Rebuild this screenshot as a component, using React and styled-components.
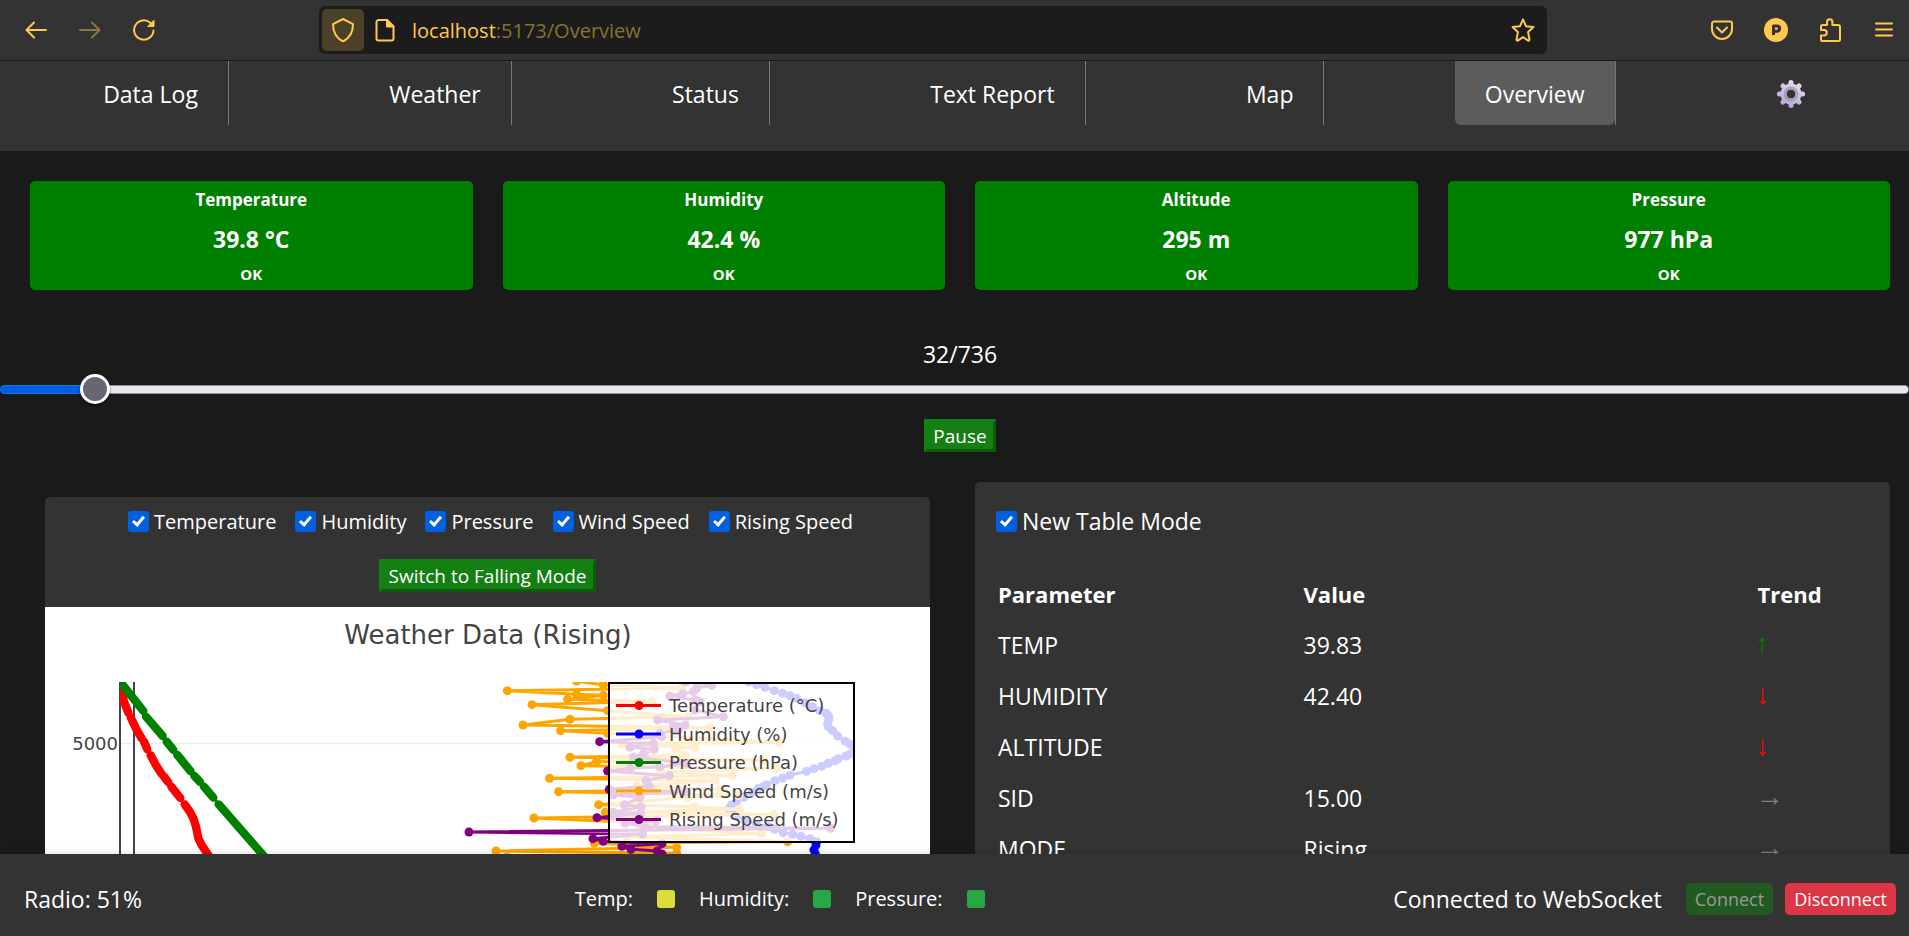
import React, { useState } from "react";
import styled, { createGlobalStyle, css } from "styled-components";

const GlobalStyle = createGlobalStyle`
  *, *::before, *::after { box-sizing: border-box; }
  body {
    margin: 0;
    background: #1a1a1a;
    color: #fff;
    font-family: "Open Sans", "Noto Sans", sans-serif;
    font-size: 23px;
    line-height: 32px;
  }
  button, input { font: inherit; color: inherit; margin: 0; }
`;

const Window = styled.div`
  display: flex;
  flex-direction: column;
  height: 100vh;
`;

/* ---------- browser toolbar ---------- */

const Toolbar = styled.header`
  display: flex;
  align-items: center;
  flex: none;
  height: 61px;
  padding: 0 13px 0 24px;
  background: #333;
  border-bottom: 1px solid #1a1a1a;
  color: #ffc94d;
`;

const ToolGroup = styled.div`
  display: flex;
  align-items: center;
  gap: 30px;
`;

const ToolButton = styled.button`
  display: flex;
  align-items: center;
  justify-content: center;
  flex: none;
  width: 24px;
  height: 24px;
  padding: 0;
  border: 0;
  background: none;
  opacity: ${(p) => (p.disabled ? 0.45 : 1)};
`;

const AddressBar = styled.div`
  display: flex;
  align-items: center;
  flex: 1;
  min-width: 0;
  height: 48px;
  margin: 0 163px;
  padding: 0 12px 0 3px;
  border-radius: 6px;
  background: #1c1c1c;
`;

const ShieldButton = styled(ToolButton)`
  width: 42px;
  height: 42px;
  margin-right: 9px;
  border-radius: 5px;
  background: #4d4028;
`;

const Address = styled.div`
  position: relative;
  flex: 1;
  margin-left: 15px;
  padding-top: 2px;
  font-size: 20px;
`;

const AddressInput = styled.input`
  position: absolute;
  inset: 0;
  width: 100%;
  padding: 0;
  border: 0;
  outline: 0;
  background: none;
  color: transparent;
`;

const Faded = styled.span`
  color: #8c7033;
`;

const Icon = styled.svg`
  display: block;
  flex: none;
  width: ${(p) => p.$size || 24}px;
  height: ${(p) => p.$size || 24}px;
  fill: none;
  stroke: currentColor;
  stroke-width: 2;
  stroke-linecap: round;
  stroke-linejoin: round;
`;

/* ---------- navigation ---------- */

const Nav = styled.nav`
  flex: none;
  height: 90px;
  padding: 0 8px;
  background: #333;
`;

const NavList = styled.ul`
  display: flex;
  justify-content: space-around;
  margin: 0;
  padding: 0;
  list-style: none;
`;

const NavItem = styled.li`
  border-right: ${(p) => (p.$last ? "0" : "1px solid #777")};
`;

const NavLink = styled.a`
  display: flex;
  align-items: center;
  height: 64px;
  padding: 1px 30px 0;
  border-radius: 0 0 6px 6px;
  color: #fff;
  text-decoration: none;
  background: ${(p) => (p.$active ? "#5c5c5c" : "transparent")};
`;

/* ---------- page ---------- */

const Page = styled.main`
  flex: 1;
  min-height: 0;
  overflow-y: auto;
  scrollbar-width: none;
`;

const Cards = styled.section`
  display: grid;
  grid-template-columns: repeat(4, 1fr);
  gap: 30px;
  padding: 30px 19px 30px 30px;
`;

const Card = styled.article`
  padding: 4px 4px 5px;
  border-radius: 5px;
  background: #008000;
  text-align: center;
  font-weight: 700;
`;

const CardTitle = styled.h2`
  margin: 0;
  font-size: 17px;
  line-height: 30px;
`;

const CardValue = styled.p`
  margin: 3px 0 4px;
  font-size: 23px;
  line-height: 42px;
`;

const CardStatus = styled.p`
  margin: 0;
  font-size: 15px;
  line-height: 21px;
`;

const Playback = styled.section`
  display: flex;
  flex-direction: column;
  align-items: center;
  padding-left: 11px;
  padding-top: 18px;
`;

const Slider = styled.input`
  appearance: none;
  display: block;
  width: calc(100% + 11px);
  height: 30px;
  margin: 4px 0 0 -11px;
  background: none;

  &::-webkit-slider-runnable-track {
    height: 9px;
    border: 1px solid transparent;
    border-radius: 5px;
    background:
      linear-gradient(90deg, #0060df var(--fill), #e9e9ed var(--fill)) padding-box,
      linear-gradient(90deg, #1a70f0 var(--fill), #8f8f9d var(--fill)) border-box;
  }
  &::-webkit-slider-thumb {
    appearance: none;
    width: 30px;
    height: 30px;
    margin-top: -12px;
    border: 3px solid #fff;
    border-radius: 50%;
    background: #676774;
    box-shadow: 0 2px 3px rgba(0, 0, 0, 0.5);
  }
`;

const GreenButton = styled.button`
  height: 33px;
  padding: 2px 6px 0;
  border: 3px solid #148014;
  border-right-color: #0f5a0f;
  border-bottom-color: #0f5a0f;
  background: #148014;
  font-size: 19px;
  line-height: 25px;
`;

const PauseRow = styled.div`
  display: flex;
  margin-top: 15px;
`;

const Panels = styled.section`
  display: grid;
  grid-template-columns: 885fr 915fr;
  align-items: start;
  gap: 45px;
  padding: 30px 19px 30px 45px;
`;

const Panel = styled.div`
  overflow: hidden;
  border-radius: 5px;
  background: #333;
`;

const ChartPanel = styled(Panel)`
  margin-top: 15px;
`;

const ChartControls = styled.div`
  display: flex;
  flex-direction: column;
  align-items: center;
  gap: 22px;
  height: 110px;
  padding-top: 9px;
`;

const CheckRow = styled.div`
  display: flex;
  flex-wrap: wrap;
  gap: 19px;
  padding-left: 6px;
  font-size: 20px;
  line-height: 31px;
`;

const CheckLabel = styled.label`
  display: flex;
  align-items: center;
  gap: 5px;
`;

const Tick = styled.input`
  appearance: none;
  position: relative;
  flex: none;
  width: 21px;
  height: 21px;
  border: 2px solid #8f8f9d;
  border-radius: 3px;
  background: #fff;

  &:checked {
    border-color: #0060df;
    background: #0060df;
  }
  &:checked::after {
    content: "";
    position: absolute;
    left: 5px;
    top: 1px;
    width: 7px;
    height: 12px;
    border: solid #fff;
    border-width: 0 3px 3px 0;
    transform: rotate(40deg);
  }
`;

const Chart = styled.svg`
  display: block;
  width: 100%;
  background: #fff;
  font-family: "DejaVu Sans", Verdana, sans-serif;
  font-size: 18px;
  fill: #444;
`;

const TablePanel = styled(Panel)`
  padding: 22px 21px 45px;
`;

const TableMode = styled(CheckLabel)`
  height: 34px;
`;

const Table = styled.table`
  width: 100%;
  margin-top: 29px;
  border-collapse: collapse;
  text-align: left;
`;

const Cell = styled.td`
  height: 51px;
  padding: 3px 2px 0;
  font-weight: 400;
  color: ${(p) => p.$color || "#fff"};
`;

const HeadCell = styled.th`
  width: ${(p) => p.$width};
  height: 51px;
  padding: 2px 2px 0;
  font-size: 22px;
  font-weight: 700;
`;

const Trend = styled(Cell)`
  padding: 0;
  font-family: "Liberation Sans", sans-serif;
  font-size: 28px;
`;

/* ---------- status bar ---------- */

const StatusBar = styled.footer`
  display: flex;
  align-items: center;
  justify-content: space-between;
  flex: none;
  height: 82px;
  padding: 8px 13px 0 24px;
  background: #333;
  z-index: 1;
  box-shadow: 0 -2px 6px rgba(0, 0, 0, 0.1);
`;

const Sensors = styled.div`
  display: flex;
  gap: 24px;
  padding-left: 24px;
  font-size: 20px;
`;

const Sensor = styled.span`
  display: flex;
  align-items: center;
  gap: 24px;
`;

const Lamp = styled.i`
  width: 18px;
  height: 18px;
  border-radius: 3px;
  background: ${(p) => p.$color};
`;

const Connection = styled.div`
  display: flex;
  align-items: center;
  gap: 12px;
`;

const ConnectionText = styled.span`
  margin-right: 12px;
`;

const SocketButton = styled.button`
  height: 32px;
  padding: 0 9px;
  border: 0;
  border-radius: 5px;
  font-size: 18px;
  line-height: 32px;
  background: ${(p) => (p.$danger ? "#dc3545" : "#28a745")};
  ${(p) =>
    p.disabled &&
    css`
      background: #215a21;
      color: #999;
    `}
`;

/* ---------- data ---------- */

const LINKS = ["Data Log", "Weather", "Status", "Text Report", "Map", "Overview"];

const CARDS = [
  ["Temperature", "39.8 °C"],
  ["Humidity", "42.4 %"],
  ["Altitude", "295 m"],
  ["Pressure", "977 hPa"],
];

const SERIES_TOGGLES = ["Temperature", "Humidity", "Pressure", "Wind Speed", "Rising Speed"];

const ROWS = [
  ["TEMP", "39.83", "up"],
  ["HUMIDITY", "42.40", "down"],
  ["ALTITUDE", "", "down"],
  ["SID", "15.00", "same"],
  ["MODE", "Rising", "same"],
];

const TRENDS = {
  up: ["↑", "#008000"],
  down: ["↓", "#ff0000"],
  same: ["→", "#808080"],
};

const LEGEND = [
  ["Temperature (°C)", "#ff0000"],
  ["Humidity (%)", "#0000ff"],
  ["Pressure (hPa)", "#008000"],
  ["Wind Speed (m/s)", "#ffa500"],
  ["Rising Speed (m/s)", "#800080"],
];

const TEMPERATURE = [
  "366,668 372,695 385,728", "392,742 410,780 425,805", "432,815 442,838",
  "452,856 468,886 485,912", "492,920 505,937", "514,950 541,984",
  "554,1003 570,1026 580,1045 588,1070 595,1105 605,1125 628,1160 650,1200",
];
const PRESSURE = [
  "366,642 430,723", "438,740 488,798", "500,815 520,840", "532,855 572,904",
  "583,918 600,936", "612,950 640,983", "656,1003 830,1202",
];
const HUMIDITY =
  "925,66 950,74 975,82 1003,92 1028,100 1050,107 1070,115 1095,128 1118,140 1140,152 1158,160 1166,168 1167,178 1163,190 1165,200 1178,212 1193,228 1216,244 1230,252 1243,268 1230,282 1218,288 1195,296 1185,303 1165,310 1145,319 1122,326 1100,334 1050,346 1028,354 1005,362 980,374 970,380 955,385 935,398 912,412 890,424 875,434 866,446 885,466 915,480 950,494 985,500 1003,507 1030,518 1058,523 1083,529 1110,536 1130,545 1128,555 1122,570 1126,582 1130,598";
const WIND =
  "410,63 490,75 725,84 202,92 410,103 490,106 383,118 637,124 276,134 503,152 745,170 390,178 249,195 810,203 362,212 503,220 1018,247 545,252 765,262 705,266 735,285 390,292 970,300 470,305 423,317 1010,326 660,335 878,347 329,355 825,362 590,378 840,388 356,395 895,406 745,412 476,434 763,440 900,448 496,457 1003,463 282,474 640,490 600,500 965,521 560,530 1043,545 463,550 710,562 168,573 710,580 200,592";
const RISING =
  "737,66 815,76 770,85 760,95 728,101 690,108 765,120 780,125 765,150 850,170 653,180 735,195 700,198 715,210 660,220 665,230 479,245 640,250 570,262 643,268 610,282 580,291 740,310 660,320 570,325 503,333 688,347 618,362 628,378 508,388 740,396 520,405 600,412 553,434 603,440 520,457 603,460 471,473 648,483 555,490 615,500 1172,505 87,516 608,522 459,536 490,544 666,551 546,559 573,568 652,573 666,582";

/* ---------- drawings ---------- */

const GearIcon = () => (
  <Icon viewBox="0 0 30 30" $size={30} role="img" aria-label="Settings" strokeWidth="0">
    <defs>
      <linearGradient id="gear" gradientUnits="userSpaceOnUse" x1="22" y1="2" x2="10" y2="28">
        <stop offset="0" stopColor="#e6dfee" />
        <stop offset="1" stopColor="#b7a6d3" />
      </linearGradient>
    </defs>
    <path
      d="M15 3.400V8M15 22v4.600M3.400 15H8M22 15h4.600M7 7l3 3M20 20l3 3M23 7l-3 3M10 20l-3 3"
      stroke="url(#gear)"
      style={{ strokeWidth: 5 }}
    />
    <circle cx="15" cy="15" r="7.500" stroke="url(#gear)" style={{ strokeWidth: 6 }} />
    <circle cx="15" cy="15" r="6" stroke="#9d8fae" opacity="0.7" style={{ strokeWidth: 3 }} />
  </Icon>
);

function Trace({ points, color }) {
  return (
    <g>
      <polyline points={points} fill="none" stroke={color} strokeWidth="9" strokeLinejoin="round" />
      {points.split(" ").map((p) => {
        const [x, y] = p.split(",");
        return <circle key={p} cx={x} cy={y} r="13.5" fill={color} />;
      })}
    </g>
  );
}

function DenseTrace({ runs, color }) {
  return (
    <g fill="none" stroke={color} strokeLinecap="round" strokeLinejoin="round">
      <polyline points={runs.join(" ")} strokeWidth="9" />
      {runs.map((run) => (
        <polyline key={run} points={run} strokeWidth="25" />
      ))}
    </g>
  );
}

function WeatherChart({ shown }) {
  return (
    <Chart viewBox="0 0 885 600" role="img" aria-label="Weather Data (Rising)">
      <defs>
        <clipPath id="plot">
          <rect x="75" y="75" width="735" height="480" />
        </clipPath>
      </defs>
      <text x="443" y="37" fontSize="26" textAnchor="middle">Weather Data (Rising)</text>
      <text x="73" y="143" textAnchor="end">5000</text>
      <path d="M76 136.5H810" stroke="#eee" strokeWidth="1.5" />
      <path d="M75 75V555M89 75V555" stroke="#444" strokeWidth="2" />
      <g clipPath="url(#plot)">
        <g transform="translate(-45 -137) scale(0.3333)">
          {shown.Temperature && <DenseTrace runs={TEMPERATURE} color="#ff0000" />}
        </g>
        <g transform="translate(395 53) scale(0.3333)">
          {shown.Humidity && <Trace points={HUMIDITY} color="#0000ff" />}
        </g>
        <g transform="translate(-45 -137) scale(0.3333)">
          {shown.Pressure && <DenseTrace runs={PRESSURE} color="#008000" />}
        </g>
        <g transform="translate(395 53) scale(0.3333)">
          {shown["Wind Speed"] && <Trace points={WIND} color="#ffa500" />}
          {shown["Rising Speed"] && <Trace points={RISING} color="#800080" />}
        </g>
      </g>
      <rect x="564" y="76" width="245" height="159" fill="#fff" fillOpacity="0.8" stroke="#000" strokeWidth="2" />
      {LEGEND.map(([name, color], i) => (
        <g key={name} transform={`translate(0 ${i * 28.5})`}>
          <path d="M571 98.5h45" stroke={color} strokeWidth="3" />
          <circle cx="594" cy="98.5" r="4.5" fill={color} />
          <text x="624" y="105">{name}</text>
        </g>
      ))}
    </Chart>
  );
}

/* ---------- app ---------- */

export default function App() {
  const [frame, setFrame] = useState(32);
  const [playing, setPlaying] = useState(true);
  const [tableMode, setTableMode] = useState(true);
  const [shown, setShown] = useState(
    Object.fromEntries(SERIES_TOGGLES.map((name) => [name, true]))
  );
  const total = 736;

  return (
    <Window>
      <GlobalStyle />
      <Toolbar>
        <ToolGroup>
          <ToolButton aria-label="Back">
            <Icon viewBox="0 0 24 24"><path d="M22 12H3M10 4.5L2.5 12l7.500 7.500" /></Icon>
          </ToolButton>
          <ToolButton aria-label="Forward" disabled>
            <Icon viewBox="0 0 24 24"><path d="M2 12h19M14 4.5l7.500 7.500-7.500 7.500" /></Icon>
          </ToolButton>
          <ToolButton aria-label="Reload">
            <Icon viewBox="0 0 24 24">
              <path d="M21.500 12.500A9.700 9.700 0 1 1 18.500 5" />
              <path d="M22 2.500V8.500H16z" fill="currentColor" strokeWidth="1" />
            </Icon>
          </ToolButton>
        </ToolGroup>
        <AddressBar>
          <ShieldButton aria-label="Tracking protection">
            <Icon viewBox="0 0 24 24">
              <path d="M12 1L22 6.200C22 14 18.500 20 12 23.500C5.500 20 2 14 2 6.200z" />
            </Icon>
          </ShieldButton>
          <ToolButton aria-label="Site information">
            <Icon viewBox="0 0 24 24">
              <path d="M5.500 2H14L20.500 8.500V20.500a2 2 0 0 1-2 2H5.500a2 2 0 0 1-2-2V4a2 2 0 0 1 2-2z" />
              <path d="M14 2v6.500h6.500z" fill="currentColor" />
            </Icon>
          </ToolButton>
          <Address>
            localhost<Faded>:5173/Overview</Faded>
            <AddressInput aria-label="Address" />
          </Address>
          <ToolButton aria-label="Bookmark this page">
            <Icon viewBox="0 0 24 24">
              <path d="M12 1.500l3 6.700 7.500.900-5.400 5 1.400 7.600a.9.9 0 0 1-1.300.9L12 19.200l-5.200 3.400a.9.9 0 0 1-1.300-.9l1.400-7.600-5.400-5 7.500-.900z" />
            </Icon>
          </ToolButton>
        </AddressBar>
        <ToolGroup>
          <ToolButton aria-label="Save to Pocket">
            <Icon viewBox="0 0 24 24">
              <path d="M4 3.500h16a2 2 0 0 1 2 2V11a10 10 0 0 1-20 0V5.500a2 2 0 0 1 2-2zM7 9.500l5 5 5-5" />
            </Icon>
          </ToolButton>
          <ToolButton aria-label="Account">
            <Icon viewBox="0 0 24 24">
              <circle cx="12" cy="12" r="12" fill="currentColor" stroke="none" />
              <path d="M9.500 17V8h3.500a2.500 2.500 0 0 1 0 5.200H9.500" stroke="#333" strokeLinecap="butt" style={{ strokeWidth: 3 }} />
            </Icon>
          </ToolButton>
          <ToolButton aria-label="Extensions">
            <Icon viewBox="0 0 24 24">
              <path d="M3 12V8.500a1.500 1.500 0 0 1 1.500-1.500H9V4a2.700 2.700 0 0 1 5.400 0v3H20a2 2 0 0 1 2 2v12.500a1.500 1.500 0 0 1-1.500 1.500H4.500A1.500 1.500 0 0 1 3 21.500V17.500h3a2.700 2.700 0 0 0 0-5.500z" />
            </Icon>
          </ToolButton>
          <ToolButton aria-label="Menu">
            <Icon viewBox="0 0 24 24"><path d="M4 5.500h16M4 11.500h16M4 17.500h16" /></Icon>
          </ToolButton>
        </ToolGroup>
      </Toolbar>

      <Nav>
        <NavList>
          {LINKS.map((name) => (
            <NavItem key={name}>
              <NavLink href="#" $active={name === "Overview"}>{name}</NavLink>
            </NavItem>
          ))}
          <NavItem $last>
            <NavLink href="#"><GearIcon /></NavLink>
          </NavItem>
        </NavList>
      </Nav>

      <Page>
        <Cards>
          {CARDS.map(([title, value]) => (
            <Card key={title}>
              <CardTitle>{title}</CardTitle>
              <CardValue>{value}</CardValue>
              <CardStatus>OK</CardStatus>
            </Card>
          ))}
        </Cards>

        <Playback>
          <label htmlFor="frame">{frame}/{total}</label>
          <Slider
            id="frame"
            type="range"
            min="1"
            max={total}
            value={frame}
            onChange={(e) => setFrame(Number(e.target.value))}
            style={{ "--fill": `${((frame - 1) / (total - 1)) * 100 + 0.5}%` }}
          />
          <PauseRow>
            <GreenButton onClick={() => setPlaying(!playing)}>{playing ? "Pause" : "Play"}</GreenButton>
          </PauseRow>
        </Playback>

        <Panels>
          <ChartPanel>
            <ChartControls>
              <CheckRow>
                {SERIES_TOGGLES.map((name) => (
                  <CheckLabel key={name}>
                    <Tick
                      type="checkbox"
                      checked={shown[name]}
                      onChange={(e) => setShown({ ...shown, [name]: e.target.checked })}
                    />
                    {name}
                  </CheckLabel>
                ))}
              </CheckRow>
              <GreenButton>Switch to Falling Mode</GreenButton>
            </ChartControls>
            <WeatherChart shown={shown} />
          </ChartPanel>

          <TablePanel>
            <TableMode>
              <Tick type="checkbox" checked={tableMode} onChange={(e) => setTableMode(e.target.checked)} />
              New Table Mode
            </TableMode>
            <Table>
              <thead>
                <tr>
                  <HeadCell $width="35%">Parameter</HeadCell>
                  <HeadCell $width="52%">Value</HeadCell>
                  <HeadCell $width="13%">Trend</HeadCell>
                </tr>
              </thead>
              <tbody>
                {ROWS.map(([name, value, trend]) => (
                  <tr key={name}>
                    <Cell>{name}</Cell>
                    <Cell>{value}</Cell>
                    <Trend $color={TRENDS[trend][1]}>{TRENDS[trend][0]}</Trend>
                  </tr>
                ))}
              </tbody>
            </Table>
          </TablePanel>
        </Panels>
      </Page>

      <StatusBar>
        <span>Radio: 51%</span>
        <Sensors>
          <Sensor>Temp: <Lamp $color="#dcdc3c" /></Sensor>
          <Sensor>Humidity: <Lamp $color="#28a745" /></Sensor>
          <Sensor>Pressure: <Lamp $color="#28a745" /></Sensor>
        </Sensors>
        <Connection>
          <ConnectionText>Connected to WebSocket</ConnectionText>
          <SocketButton disabled>Connect</SocketButton>
          <SocketButton $danger>Disconnect</SocketButton>
        </Connection>
      </StatusBar>
    </Window>
  );
}
